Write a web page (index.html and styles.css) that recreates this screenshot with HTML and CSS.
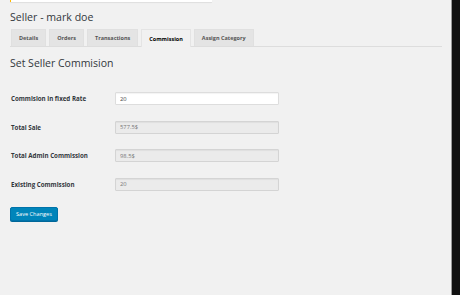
FILE: index.html
```html
<!DOCTYPE html>
<html>
<head>
    <meta charset="UTF-8">
    <meta name="viewport" content="width=device-width, initial-scale=1.0">
    <title>Seller - mark doe</title>
    <link rel="stylesheet" href="styles.css">
</head>
<body>
    <div class="layout">
        <div class="wrap">
            <div class="notice"></div>
            <h1>Seller - mark doe</h1>
            <nav class="tabs">
                <a class="tab" href="#">Details</a>
                <a class="tab" href="#">Orders</a>
                <a class="tab" href="#">Transactions</a>
                <a class="tab active" href="#">Commission</a>
                <a class="tab" href="#">Assign Category</a>
            </nav>
            <h2>Set Seller Commision</h2>
            <form class="form-table">
                <label for="rate">Commision in fixed Rate</label>
                <input type="text" id="rate" value="20">
                <label>Total Sale</label>
                <input type="text" value="577.5$" readonly>
                <label>Total Admin Commission</label>
                <input type="text" value="98.5$" readonly>
                <label>Existing Commission</label>
                <input type="text" value="20" readonly>
            </form>
            <button type="button" class="button-primary">Save Changes</button>
        </div>
        <div class="edge"></div>
    </div>
</body>
</html>
```
FILE: styles.css
```css
html, body { height: 100%; }
body { margin: 0; background: #f1f1f1; font-family: "Open Sans", "Noto Sans", sans-serif; color: #23282d; }
.layout { display: flex; height: 295px; }
.wrap { flex: 1; padding: 0 9px 0 10px; }
.edge { width: 8px; background: #111; border-left: 1px solid #9a9a9a; }

.notice { width: 201px; height: 2px; background: #fff; border-left: 1px solid #ffb900; box-shadow: 0 1px 1px rgba(0,0,0,0.08); }
h1 { font-size: 10.6px; font-weight: 400; margin: 8px 0 0; line-height: 15px; color: #32373c; }

.tabs { display: flex; gap: 3px; margin-top: 4px; padding-left: 1px; border-bottom: 1px solid #ddd; height: 17px; }
.tab { display: flex; align-items: center; padding: 0 7px; background: #e4e4e4; color: #555; font-size: 5.5px; font-weight: 700; text-decoration: none; border: 1px solid #e0e0e0; border-bottom: none; }
.tab.active { background: #f1f1f1; color: #000; border-color: #e4e4e4; margin-bottom: -1px; }

h2 { font-size: 10.5px; font-weight: 400; margin: 9px 0 0; line-height: 14px; color: #32373c; }

.form-table { display: grid; grid-template-columns: 104px 164px; grid-auto-rows: 13px; row-gap: 15.5px; align-items: center; margin-top: 22px; padding-left: 1px; }
.form-table label { font-size: 6.2px; font-weight: 700; color: #32373c; }
.form-table input { box-sizing: border-box; height: 13px; width: 164px; margin: 0; padding: 0 4px; border: 1px solid #ddd; border-radius: 1px; background: #fff; font: 5.8px "Open Sans", "Noto Sans", sans-serif; color: #444; box-shadow: inset 0 1px 1px rgba(0,0,0,0.05); }
.form-table input[readonly] { background: #ebebeb; color: #777; border-color: #d4d4d4; }

.button-primary { display: block; margin-top: 16px; height: 14px; padding: 0 5px; background: #0085ba; border: 1px solid #0073aa; border-radius: 2px; color: #fff; font: 5.6px "Open Sans", "Noto Sans", sans-serif; box-shadow: 0 1px 0 #006799; cursor: pointer; }
```
